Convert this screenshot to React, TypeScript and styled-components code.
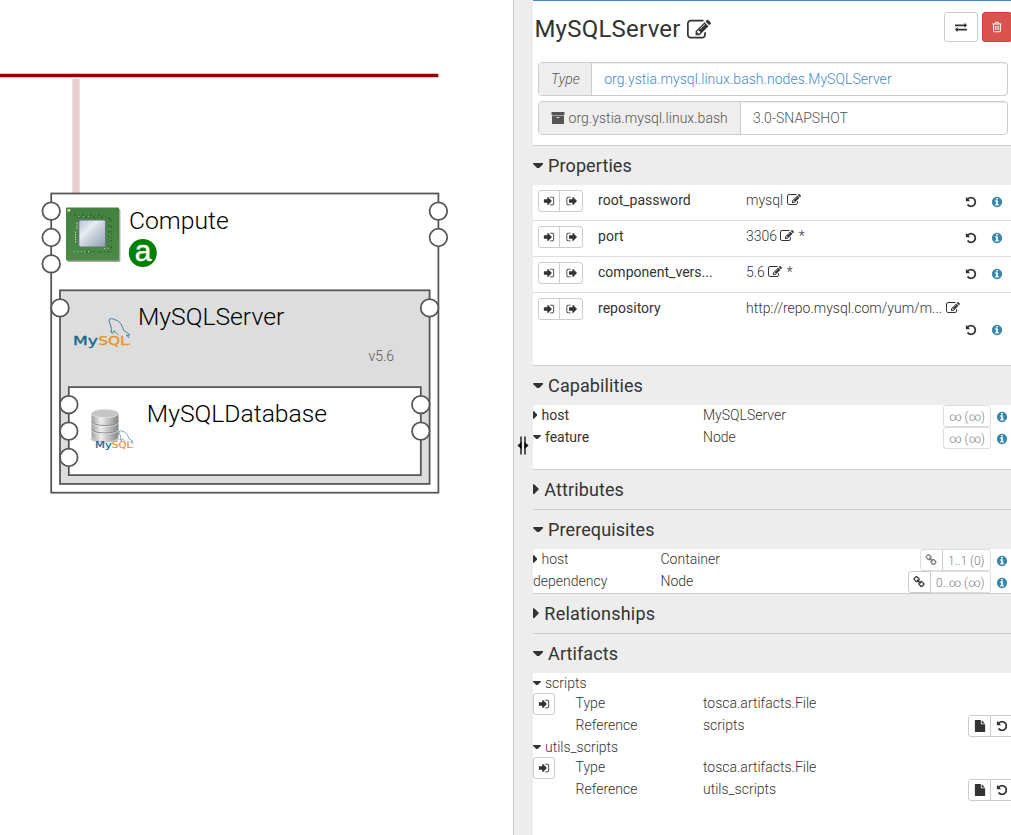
import React from "react";
import styled, { createGlobalStyle, css } from "styled-components";

const GlobalStyle = createGlobalStyle`
  * { box-sizing: border-box; }
  body {
    margin: 0;
    background: #fff;
    color: #333;
    font: 300 14px/20px Roboto, "Liberation Sans", sans-serif;
    overflow: hidden;
  }
`;

/* ---------- icons ---------- */

const paths = {
  edit: "M888 1184l116-116-152-152-116 116v56h96v96h56zm440-720q-16-16-33 1l-350 350q-17 17-1 33t33-1l350-350q17-17 1-33zm80 594v190q0 119-84.5 203.5t-203.5 84.5h-832q-119 0-203.5-84.5t-84.5-203.5v-832q0-119 84.5-203.5t203.5-84.5h832q63 0 117 25 15 7 18 23 3 17-9 29l-49 49q-14 14-32 8-23-6-45-6h-832q-66 0-113 47t-47 113v832q0 66 47 113t113 47h832q66 0 113-47t47-113v-126q0-13 9-22l64-64q15-15 35-7t20 29zm-96-738l288 288-672 672h-288v-288zm444 132l-92 92-288-288 92-92q28-28 68-28t68 28l152 152q28 28 28 68t-28 68z",
  signIn: "M1312 896q0 26-19 45l-544 544q-19 19-45 19t-45-19-19-45v-288h-448q-26 0-45-19t-19-45v-384q0-26 19-45t45-19h448v-288q0-26 19-45t45-19 45 19l544 544q19 19 19 45zm352-352v704q0 119-84.5 203.5t-203.5 84.5h-320q-13 0-22.5-9.5t-9.5-22.5q0-4-1-20t-.5-26.5 3-23.5 10-19.5 20.5-6.5h320q66 0 113-47t47-113v-704q0-66-47-113t-113-47h-312l-11.5-1-11.5-3-8-5.5-7-9-2-13.5q0-4-1-20t-.5-26.5 3-23.5 10-19.5 20.5-6.5h320q119 0 203.5 84.5t84.5 203.5z",
  signOut: "M704 1440q0 4 1 20t.5 26.5-3 23.5-10 19.5-20.5 6.5h-320q-119 0-203.5-84.5t-84.5-203.5v-704q0-119 84.5-203.5t203.5-84.5h320q13 0 22.5 9.5t9.5 22.5q0 4 1 20t.5 26.5-3 23.5-10 19.5-20.5 6.5h-320q-66 0-113 47t-47 113v704q0 66 47 113t113 47h312l11.5 1 11.5 3 8 5.5 7 9 2 13.5zm928-544q0 26-19 45l-544 544q-19 19-45 19t-45-19-19-45v-288h-448q-26 0-45-19t-19-45v-384q0-26 19-45t45-19h448v-288q0-26 19-45t45-19 45 19l544 544q19 19 19 45z",
  undo: "M1664 896q0 156-61 298t-164 245-245 164-298 61q-172 0-327-72.5t-264-204.5q-7-10-6.5-22.5t8.5-20.5l137-138q10-9 25-9 16 2 23 12 73 95 179 147t225 52q104 0 198.5-40.5t163.5-109.5 109.5-163.5 40.5-198.5-40.5-198.5-109.5-163.5-163.5-109.5-198.5-40.5q-98 0-188 35.5t-160 101.5l137 138q31 30 14 69-17 40-59 40h-448q-26 0-45-19t-19-45v-448q0-42 40-59 39-17 69 14l130 129q107-101 244.5-156.5t284.5-55.5q156 0 298 61t245 164 164 245 61 298z",
  info: "M1152 1376v-160q0-14-9-23t-23-9h-96v-512q0-14-9-23t-23-9h-320q-14 0-23 9t-9 23v160q0 14 9 23t23 9h96v320h-96q-14 0-23 9t-9 23v160q0 14 9 23t23 9h448q14 0 23-9t9-23zm-128-896v-160q0-14-9-23t-23-9h-192q-14 0-23 9t-9 23v160q0 14 9 23t23 9h192q14 0 23-9t9-23zm640 416q0 209-103 385.5t-279.5 279.5-385.5 103-385.5-103-279.5-279.5-103-385.5 103-385.5 279.5-279.5 385.5-103 385.5 103 279.5 279.5 103 385.5z",
  trash: "M704 736v576q0 14-9 23t-23 9h-64q-14 0-23-9t-9-23v-576q0-14 9-23t23-9h64q14 0 23 9t9 23zm256 0v576q0 14-9 23t-23 9h-64q-14 0-23-9t-9-23v-576q0-14 9-23t23-9h64q14 0 23 9t9 23zm256 0v576q0 14-9 23t-23 9h-64q-14 0-23-9t-9-23v-576q0-14 9-23t23-9h64q14 0 23 9t9 23zm128 724v-948h-896v948q0 22 7 40.5t14.5 27 10.5 8.5h832q3 0 10.5-8.5t14.5-27 7-40.5zm-672-1076h448l-48-117q-7-9-17-11h-317q-10 2-17 11zm928 32v64q0 14-9 23t-23 9h-96v948q0 83-47 143.5t-113 60.5h-832q-66 0-113-58.5t-47-141.5v-952h-96q-14 0-23-9t-9-23v-64q0-14 9-23t23-9h309l70-167q15-37 54-63t79-26h320q40 0 79 26t54 63l70 167h309q14 0 23 9t9 23z",
  exchange: "M1792 1184v192q0 13-9.5 22.5t-22.5 9.5h-1376v192q0 13-9.5 22.5t-22.5 9.5q-12 0-24-10l-319-320q-9-9-9-22 0-14 9-23l320-320q9-9 23-9 13 0 22.5 9.5t9.5 22.5v192h1376q13 0 22.5 9.5t9.5 22.5zm0-544q0 14-9 23l-320 320q-9 9-23 9-13 0-22.5-9.5t-9.5-22.5v-192h-1376q-13 0-22.5-9.5t-9.5-22.5v-192q0-13 9.5-22.5t22.5-9.5h1376v-192q0-14 9-23t23-9q12 0 24 10l319 319q9 9 9 23z",
  archive: "M1088 832q0-26-19-45t-45-19h-256q-26 0-45 19t-19 45 19 45 45 19h256q26 0 45-19t19-45zm576-192v960q0 26-19 45t-45 19h-1408q-26 0-45-19t-19-45v-960q0-26 19-45t45-19h1408q26 0 45 19t19 45zm64-448v256q0 26-19 45t-45 19h-1536q-26 0-45-19t-19-45v-256q0-26 19-45t45-19h1536q26 0 45 19t19 45z",
  link: "M1520 1216q0-40-28-68l-208-208q-28-28-68-28-42 0-72 32 3 3 19 18.5t21.5 21.5 15 19 13 25.5 3.5 27.5q0 40-28 68t-68 28q-15 0-27.5-3.5t-25.5-13-19-15-21.5-21.5-18.5-19q-33 31-33 73 0 40 28 68l206 207q27 27 68 27 40 0 68-26l147-146q28-28 28-67zm-703-705q0-40-28-68l-206-207q-28-28-68-28-39 0-68 27l-147 146q-28 28-28 67 0 40 28 68l208 208q27 27 68 27 42 0 72-31-3-3-19-18.5t-21.5-21.5-15-19-13-25.5-3.5-27.5q0-40 28-68t68-28q15 0 27.5 3.5t25.5 13 19 15 21.5 21.5 18.5 19q33-31 33-73zm895 705q0 120-85 203l-147 146q-83 83-203 83-121 0-204-85l-206-207q-83-83-83-203 0-123 88-209l-88-88q-86 88-208 88-120 0-204-84l-208-208q-84-84-84-204t85-203l147-146q83-83 203-83 121 0 204 85l206 207q83 83 83 203 0 123-88 209l88 88q86-88 208-88 120 0 204 84l208 208q84 84 84 204z",
  file: "M1152 512v-472q22 14 36 28l408 408q14 14 28 36h-472zm-128 32q0 40 28 68t68 28h544v1056q0 40-28 68t-68 28h-1344q-40 0-68-28t-28-68v-1600q0-40 28-68t68-28h800v544z",
};

const Svg = styled.svg<{ $size: number }>`
  width: ${(p) => p.$size}px;
  height: ${(p) => p.$size}px;
  flex: none;
  display: block;
  fill: currentColor;
  overflow: visible;
`;

function Icon({ name, size = 12 }: { name: keyof typeof paths; size?: number }) {
  return (
    <Svg $size={size} viewBox="0 0 1792 1792">
      <path d={paths[name]} />
    </Svg>
  );
}

const CaretSvg = styled.svg<{ $gap: number }>`
  flex: none;
  display: block;
  margin-right: ${(p) => p.$gap}px;
  fill: #333;
`;

function Caret({ open, large }: { open?: boolean; large?: boolean }) {
  const k = large ? 18 : 14;
  const w = open ? k * 0.571 : k * 0.32;
  const h = open ? k * 0.32 : k * 0.571;
  const gap = large ? (open ? 4.8 : 5.6) : 4;
  return (
    <CaretSvg width={w} height={h} $gap={gap} viewBox={open ? "0 0 16 9" : "0 0 9 16"}>
      <path d={open ? "M1 0h14q1.4.4.7 1.8L8.8 8.6q-.8.7-1.6 0L.3 1.8Q-.4.4 1 0z" : "M0 1v14q.4 1.4 1.8.7l6.8-6.9q.7-.8 0-1.6L1.8.3Q.4-.4 0 1z"} />
    </CaretSvg>
  );
}

/* ---------- page shell ---------- */

const Page = styled.div`
  display: flex;
  width: 1011px;
  height: 835px;
  overflow: hidden;
`;

const Canvas = styled.svg`
  flex: none;
  width: 513px;
  height: 835px;
  display: block;
`;

const Splitter = styled.div`
  flex: none;
  width: 20px;
  border-left: 1px solid #c8c8c8;
  background: #ededed;
  display: flex;
  align-items: center;
  padding: 56px 0 0 3px;
`;

const Panel = styled.div`
  flex: none;
  width: 478px;
  border-top: 1px solid #428bca;
`;

/* ---------- panel header ---------- */

const TitleBar = styled.div`
  display: flex;
  align-items: flex-start;
  height: 61px;
  padding: 11px 0 0 1.4px;
`;

const Title = styled.h3`
  flex: 1;
  display: flex;
  align-items: center;
  gap: 6px;
  margin: 0;
  font-size: 24px;
  line-height: 35px;
  font-weight: 400;
  letter-spacing: 0.24px;
`;

const ActionButton = styled.button<{ $danger?: boolean }>`
  flex: none;
  width: ${(p) => (p.$danger ? 30 : 34)}px;
  height: 30px;
  margin-right: ${(p) => (p.$danger ? -1 : 4)}px;
  padding: 0;
  display: flex;
  align-items: center;
  justify-content: center;
  border: 1px solid ${(p) => (p.$danger ? "#d43f3a" : "#ccc")};
  border-radius: 3px;
  background: ${(p) => (p.$danger ? "#d9534f" : "#fff")};
  color: ${(p) => (p.$danger ? "#fff" : "#333")};
`;

const InputGroup = styled.div`
  display: flex;
  height: 34px;
  margin: 0 3px 5px 5px;
  color: #555;
  line-height: 32px;
  letter-spacing: 0.045px;
  border: 1px solid #ccc;
  border-radius: 4px;
  overflow: hidden;
`;

const Addon = styled.div<{ $italic?: boolean }>`
  display: flex;
  align-items: center;
  gap: 3.5px;
  padding: 0 ${(p) => (p.$italic ? 11.4 : 12)}px 0 12px;
  background: #eee;
  border-right: 1px solid #ccc;
  font-style: ${(p) => (p.$italic ? "italic" : "normal")};
`;

const Field = styled.div<{ $link?: boolean }>`
  flex: 1;
  padding: 0 12px;
  box-shadow: inset 0 1px 1px rgba(0, 0, 0, 0.075);
  color: ${(p) => (p.$link ? "#428bca" : "#555")};
`;

/* ---------- sections ---------- */

const SectionHeader = styled.h4<{ $spacing: number }>`
  display: flex;
  align-items: center;
  height: 40px;
  margin: 0;
  border-top: 1px solid #ccc;
  background: #ededed;
  font-size: 18px;
  line-height: 39px;
  font-weight: 400;
  letter-spacing: ${(p) => p.$spacing}px;
`;

const SectionBody = styled.div<{ $height: number }>`
  height: ${(p) => p.$height}px;
`;

const IntroBody = styled.div`
  height: 144px;
`;

const SmallButton = styled.span<{ $pos?: "first" | "last"; $muted?: boolean; $wide?: boolean }>`
  flex: none;
  height: 22px;
  min-width: 22px;
  font-size: 12px;
  ${(p) => p.$wide && css`padding: 2px 5px 0;`}
  display: flex;
  align-items: center;
  justify-content: center;
  border: 1px solid ${(p) => (p.$muted ? "#ddd" : "#ccc")};
  border-radius: ${(p) => (p.$pos === "first" ? "3px 0 0 3px" : p.$pos === "last" ? "0 3px 3px 0" : "3px")};
  ${(p) => p.$pos === "last" && css`margin-left: -1px;`}
  ${(p) => p.$pos === "last" && !p.$muted && css`min-width: 24px; padding-left: 1px;`}
  ${(p) => p.$pos === "last" && p.$muted && css`padding-left: 5.5px; padding-right: 5.5px; border-left-color: #ccc;`}
  background: #fff;
  color: ${(p) => (p.$muted ? "#7d7d7d" : "#333")};
`;

const LinkButton = styled(SmallButton)`
  width: 23px;
`;

const PropertyRow = styled.div<{ $last?: boolean }>`
  display: grid;
  grid-template-columns: 60px 148px 1fr;
  height: ${(p) => (p.$last ? 58 : 36)}px;
  padding: 5px 0 0 5px;
  border-bottom: ${(p) => (p.$last ? 0 : 1)}px solid #ddd;
`;

const Buttons = styled.div`
  display: flex;
`;

const PropertyName = styled.div`
  font-weight: 400;
  letter-spacing: 0.02px;
`;

const PropertyValue = styled.div`
  display: flex;
  flex-wrap: wrap;
  align-content: flex-start;
`;

const ValueText = styled.div<{ $full?: boolean }>`
  flex: ${(p) => (p.$full ? "0 0 100%" : "1")};
  height: 20px;
  display: flex;
  align-items: center;
  gap: 3.4px;
`;

const Star = styled.span`
  margin-left: 1px;
`;

const RowIcons = styled.div`
  display: flex;
  align-items: center;
  gap: 14px;
  height: 22px;
  margin-left: auto;
  padding: 1px 8px 0 0;
`;

const Blue = styled.span`
  color: #3a87ad;
`;

const TypedRow = styled.div<{ $name: number }>`
  display: grid;
  grid-template-columns: ${(p) => p.$name}px 1fr auto;
  height: 22px;
`;

const Label = styled.div<{ $strong?: boolean }>`
  display: flex;
  align-items: center;
  height: 20px;
  font-weight: ${(p) => (p.$strong ? 400 : 300)};
`;

const Bounds = styled.div`
  display: flex;
  align-items: center;
`;

const InfoSlot = styled.span`
  margin: 2px 3px 0 5px;
  color: #3a87ad;
`;

const ArtifactRow = styled.div`
  display: grid;
  grid-template-columns: 42.6px 127.4px 1fr auto;
  height: 22px;
`;

const ArtifactTools = styled.div`
  display: flex;
  margin-right: -3px;
`;

const ResetButton = styled(SmallButton)`
  padding: 0 1px 0 0;
`;

const FileButton = styled(SmallButton)`
  width: 23px;
`;

function Section({ title, open, height = 0, children }: { title: string; open?: boolean; height?: number; children?: React.ReactNode }) {
  return (
    <section>
      <SectionHeader $spacing={title === "Relationships" ? 0.2 : 0.1}>
        <Caret open={open} large />
        {title}
      </SectionHeader>
      {open && <SectionBody $height={height}>{children}</SectionBody>}
    </section>
  );
}

function Property({ name, value, star, wrap }: { name: string; value: string; star?: boolean; wrap?: boolean }) {
  return (
    <PropertyRow $last={wrap}>
      <Buttons>
        <SmallButton $pos="first"><Icon name="signIn" /></SmallButton>
        <SmallButton $pos="last"><Icon name="signOut" /></SmallButton>
      </Buttons>
      <PropertyName>{name}</PropertyName>
      <PropertyValue>
        <ValueText $full={wrap}>
          {value}
          <Icon name="edit" size={14} />
          {star && <Star>*</Star>}
        </ValueText>
        <RowIcons>
          <Icon name="undo" />
          <Blue><Icon name="info" /></Blue>
        </RowIcons>
      </PropertyValue>
    </PropertyRow>
  );
}

function Requirement(props: { name: string; type: string; bounds: string; nameWidth: number; caret?: "open" | "closed"; strong?: boolean; link?: "on" | "off" }) {
  return (
    <TypedRow $name={props.nameWidth}>
      <Label $strong={props.strong}>
        {props.caret && <Caret open={props.caret === "open"} />}
        {props.name}
      </Label>
      <Label>{props.type}</Label>
      <Bounds>
        {props.link && (
          <LinkButton $pos="first" $muted={props.link === "off"}><Icon name="link" /></LinkButton>
        )}
        <SmallButton $muted $wide $pos={props.link ? "last" : undefined}>{props.bounds}</SmallButton>
        <InfoSlot><Icon name="info" /></InfoSlot>
      </Bounds>
    </TypedRow>
  );
}

function Artifact({ name }: { name: string }) {
  return (
    <div>
      <Label><Caret open />{name}</Label>
      <ArtifactRow>
        <Buttons><SmallButton><Icon name="signIn" /></SmallButton></Buttons>
        <span>Type</span>
        <span>tosca.artifacts.File</span>
      </ArtifactRow>
      <ArtifactRow>
        <span />
        <span>Reference</span>
        <span>{name}</span>
        <ArtifactTools>
          <FileButton $pos="first"><Icon name="file" /></FileButton>
          <ResetButton $pos="last"><Icon name="undo" /></ResetButton>
        </ArtifactTools>
      </ArtifactRow>
    </div>
  );
}

/* ---------- topology diagram ---------- */

const NodeName = styled.text`
  font: 300 24.7px Roboto, sans-serif;
  fill: #000;
`;

const NodeVersion = styled.text`
  font: 300 14px Roboto, sans-serif;
  fill: #555;
`;

const BadgeLetter = styled.text`
  font: 400 30px "Liberation Sans", sans-serif;
  fill: #fff;
  stroke: #fff;
  stroke-width: 0.4px;
  text-anchor: middle;
`;

const Wordmark = styled.text`
  font: 400 14px "DejaVu Sans", sans-serif;
  stroke-width: 0.4px;
`;

const UNIT = 0.88;

function NodeBox({ x, y, w, h, fill, left, right }: { x: number; y: number; w: number; h: number; fill: string; left: number; right: number }) {
  const ports = [
    ...Array.from({ length: left }, (_, i) => [0, 20 + i * 30]),
    ...Array.from({ length: right }, (_, i) => [w, 20 + i * 30]),
  ];
  return (
    <g transform={`translate(${x} ${y}) scale(${UNIT})`} stroke="#555" strokeWidth="2">
      <rect width={w} height={h} fill={fill} />
      {ports.map(([cx, cy]) => (
        <circle key={`${cx}-${cy}`} cx={cx} cy={cy} r="10" fill="#fff" />
      ))}
    </g>
  );
}

function ChipIcon() {
  return (
    <g transform="translate(66 207.5)">
      <defs>
        <linearGradient id="die" x1="0" y1="0" x2="1" y2="1">
          <stop offset="0" stopColor="#b4bfcf" />
          <stop offset=".35" stopColor="#e9edf3" />
          <stop offset=".5" stopColor="#cfd6e0" />
          <stop offset="1" stopColor="#929daf" />
        </linearGradient>
        <linearGradient id="board" x1="0" y1="0" x2="0" y2="1">
          <stop offset="0" stopColor="#43813f" />
          <stop offset="1" stopColor="#4b8a49" />
        </linearGradient>
      </defs>
      <rect x="1.4" y="1.6" width="53" height="53" rx="1" fill="#888" opacity=".75" />
      <rect width="53" height="53" rx="1" fill="url(#board)" />
      <rect x="1.5" y="1.5" width="2.6" height="2.6" fill="#d9dca2" />
      <g fill="none" strokeWidth="1.1">
        <path d="M8 7.7H40M11 9.8H42" stroke="#2b5a29" strokeDasharray="2 2 1 3" />
        <path d="M43 10V44M45.2 12V42" stroke="#2c5626" strokeDasharray="2 2.2 1 1.5" />
        <path d="M20 44.3H46" stroke="#2b5a29" strokeDasharray="2 2.5 1 1.5" />
        <path d="M9.5 24V36M11 15V22" stroke="#c9d8a0" strokeDasharray="1.4 1" />
        <path d="M8 44H24M38 41H44" stroke="#bcd09b" strokeDasharray="1 2.5" />
        <path d="M12 9H26M44 16V40" stroke="#a4bd7b" strokeDasharray="1 4" />
      </g>
      <rect x="12.8" y="12.5" width="26.8" height="27" rx="1.5" fill="url(#die)" stroke="#637084" strokeWidth="1.1" />
    </g>
  );
}

function MySqlLogo({ x, y, scale = 1 }: { x: number; y: number; scale?: number }) {
  return (
    <g transform={`translate(${x} ${y}) scale(${scale})`}>
      <path
        d="M36.5 15.5Q37.8 11 36 7.5Q33.5 3.5 35.3 1.5Q37 .4 39.800 2Q43.500 2.200 46.300 6.200Q48.200 10 49.300 13Q52 14.500 55.300 17.500L51.800 17.800L55.200 20.300"
        fill="none"
        stroke="#3c829b"
        strokeWidth="1"
      />
      <path d="M36.5 14.5l2 1.3 1-2.8q2.2 2.7 4.4 4.5" fill="none" stroke="#3c829b" strokeWidth=".9" />
      <g transform="translate(0 27.3) scale(1 .86)">
        <Wordmark x="-1.5" y="0" textLength="25" lengthAdjust="spacingAndGlyphs" fill="#17698b" stroke="#17698b">My</Wordmark>
        <Wordmark x="23.7" y="0" textLength="30.5" lengthAdjust="spacingAndGlyphs" fill="#e5952a" stroke="#e5952a">SQL</Wordmark>
      </g>
      <circle cx="55.2" cy="26.6" r=".8" fill="#e5952a" />
    </g>
  );
}

function DatabaseIcon() {
  return (
    <g>
      <defs>
        <linearGradient id="drum">
          <stop offset="0" stopColor="#a0a0a0" />
          <stop offset=".35" stopColor="#eeeeee" />
          <stop offset="1" stopColor="#858585" />
        </linearGradient>
      </defs>
      <ellipse cx="105" cy="439" rx="14.5" ry="3.5" fill="#999" opacity=".6" />
      <path d="M91.5 413.5V436.5Q93 441 105 441T118.5 436.5V413.5z" fill="url(#drum)" />
      <path d="M91.5 421.3Q93 425.5 105 425.5T118.5 421.3M91.5 428.8Q93 433 105 433T118.5 428.8" fill="none" stroke="#808080" strokeWidth=".9" />
      <path d="M91.5 422.3Q93 426.5 105 426.5T118.5 422.3M91.5 429.8Q93 434 105 434T118.5 429.8" fill="none" stroke="#f0f0f0" strokeWidth=".6" />
      <ellipse cx="105" cy="413.5" rx="13.5" ry="4.2" fill="#c5c5c5" stroke="#e6e6e6" strokeWidth=".8" />
    </g>
  );
}

function Topology() {
  return (
    <Canvas viewBox="0 0 513 835">
      <path d="M0 75.5H438.3" stroke="#990000" strokeWidth="3.5" />
      <path d="M76 79V193" stroke="#990000" strokeWidth="7.2" opacity=".19" />

      <NodeBox x={51.2} y={193.5} w={440} h={340} fill="#fff" left={3} right={2} />
      <ChipIcon />
      <NodeName x="129" y="229">Compute</NodeName>
      <circle cx="142.8" cy="253" r="14" fill="#008000" />
      <BadgeLetter x="143" y="261">a</BadgeLetter>

      <NodeBox x={60} y={290.3} w={420} h={220} fill="#ddd" left={1} right={1} />
      <MySqlLogo x={74.5} y={317.5} />
      <NodeName x="138" y="325">MySQLServer</NodeName>
      <NodeVersion x="368.5" y="361">v5.6</NodeVersion>

      <NodeBox x={68.8} y={387.1} w={400} h={100} fill="#fff" left={3} right={2} />
      <DatabaseIcon />
      <MySqlLogo x={96} y={430} scale={0.67} />
      <NodeName x="146.8" y="422">MySQLDatabase</NodeName>
    </Canvas>
  );
}

export default function App() {
  return (
    <Page>
      <GlobalStyle />
      <Topology />
      <Splitter>
        <svg width="12" height="19" viewBox="0 0 12 19">
          <path d="M4 .5V18.5M8 .5V18.5" stroke="#555" strokeWidth="2" />
          <path d="M4.5 6v7L.5 9.5zM7.5 6v7l4-3.5z" fill="#000" />
        </svg>
      </Splitter>
      <Panel>
        <IntroBody>
          <TitleBar>
            <Title>MySQLServer<Icon name="edit" size={24} /></Title>
            <ActionButton><Icon name="exchange" /></ActionButton>
            <ActionButton $danger><Icon name="trash" /></ActionButton>
          </TitleBar>
          <InputGroup>
            <Addon $italic>Type</Addon>
            <Field $link>org.ystia.mysql.linux.bash.nodes.MySQLServer</Field>
          </InputGroup>
          <InputGroup>
            <Addon><Icon name="archive" size={14} />org.ystia.mysql.linux.bash</Addon>
            <Field>3.0-SNAPSHOT</Field>
          </InputGroup>
        </IntroBody>
        <Section title="Properties" open height={180}>
          <Property name="root_password" value="mysql" />
          <Property name="port" value="3306" star />
          <Property name="component_vers..." value="5.6" star />
          <Property name="repository" value="http://repo.mysql.com/yum/m..." wrap />
        </Section>
        <Section title="Capabilities" open height={64}>
          <Requirement name="host" type="MySQLServer" bounds="∞ (∞)" nameWidth={170} caret="closed" strong />
          <Requirement name="feature" type="Node" bounds="∞ (∞)" nameWidth={170} caret="open" strong />
        </Section>
        <Section title="Attributes" />
        <Section title="Prerequisites" open height={44}>
          <Requirement name="host" type="Container" bounds="1..1 (0)" nameWidth={127.5} caret="closed" link="off" />
          <Requirement name="dependency" type="Node" bounds="0..∞ (∞)" nameWidth={127.5} link="on" />
        </Section>
        <Section title="Relationships" />
        <Section title="Artifacts" open height={162}>
          <Artifact name="scripts" />
          <Artifact name="utils_scripts" />
        </Section>
      </Panel>
    </Page>
  );
}
